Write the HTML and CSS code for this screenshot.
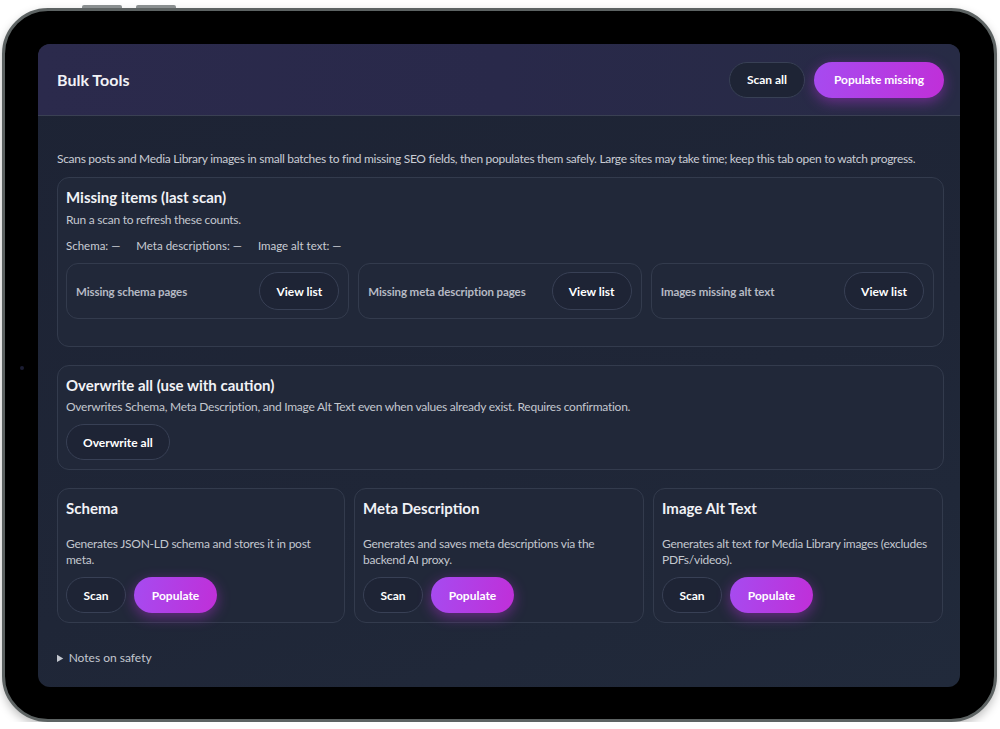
FILE: index.html
```html
<!DOCTYPE html>
<html lang="en">
  <head>
    <meta charset="UTF-8" />
    <meta name="viewport" content="width=device-width, initial-scale=1.0" />
    <title>Bulk Tools</title>
    <link rel="stylesheet" href="styles.css">
  </head>
  <body>
    <!-- tablet frame -->
    <div class="device">
      <span class="hw-btn hw-btn-1"></span>
      <span class="hw-btn hw-btn-2"></span>
      <span class="camera"></span>

      <div class="screen">
        <!-- header -->
        <div class="panel-head">
          <h1>Bulk Tools</h1>
          <div class="head-actions">
            <button class="btn btn-ghost">Scan all</button>
            <button class="btn btn-primary btn-wide">Populate missing</button>
          </div>
        </div>

        <div class="panel-body">
          <p class="intro">Scans posts and Media Library images in small batches to find missing SEO fields, then populates them safely. Large sites may take time; keep this tab open to watch progress.</p>

          <!-- missing counts -->
          <div class="card card-missing">
            <h2>Missing items (last scan)</h2>
            <p class="muted">Run a scan to refresh these counts.</p>
            <div class="counts">
              <span>Schema: —</span>
              <span>Meta descriptions: —</span>
              <span>Image alt text: —</span>
            </div>
            <div class="missing-row">
              <div class="missing-item">
                <span>Missing schema pages</span>
                <button class="btn btn-ghost btn-list">View list</button>
              </div>
              <div class="missing-item">
                <span>Missing meta description pages</span>
                <button class="btn btn-ghost btn-list">View list</button>
              </div>
              <div class="missing-item">
                <span>Images missing alt text</span>
                <button class="btn btn-ghost btn-list">View list</button>
              </div>
            </div>
          </div>

          <!-- overwrite -->
          <div class="card card-overwrite">
            <h2>Overwrite all (use with caution)</h2>
            <p class="muted">Overwrites Schema, Meta Description, and Image Alt Text even when values already exist. Requires confirmation.</p>
            <div class="actions">
              <button class="btn btn-ghost">Overwrite all</button>
            </div>
          </div>

          <!-- tools -->
          <div class="tool-grid">
            <div class="card tool">
              <h2>Schema</h2>
              <p class="muted">Generates JSON-LD schema and stores it in post meta.</p>
              <div class="actions">
                <button class="btn btn-ghost">Scan</button>
                <button class="btn btn-primary">Populate</button>
              </div>
            </div>
            <div class="card tool">
              <h2>Meta Description</h2>
              <p class="muted">Generates and saves meta descriptions via the backend AI proxy.</p>
              <div class="actions">
                <button class="btn btn-ghost">Scan</button>
                <button class="btn btn-primary">Populate</button>
              </div>
            </div>
            <div class="card tool">
              <h2>Image Alt Text</h2>
              <p class="muted">Generates alt text for Media Library images (excludes PDFs/videos).</p>
              <div class="actions">
                <button class="btn btn-ghost">Scan</button>
                <button class="btn btn-primary">Populate</button>
              </div>
            </div>
          </div>

          <details class="notes">
            <summary>Notes on safety</summary>
          </details>
        </div>
      </div>
    </div>
  </body>
</html>
```

FILE: styles.css
```css
/* page + tablet frame */
body {
  margin: 0;
  background: #fff;
  font-family: Lato, "Open Sans", sans-serif;
}
.device {
  position: relative;
  box-sizing: border-box;
  width: 995px;
  height: 714px;
  margin: 8px 0 0 2px;
  padding: 33px 34px 32px 33px;
  background: #000;
  border: 3px solid #5d6363;
  border-radius: 46px;
  box-shadow: 0 4px 10px rgba(0, 0, 0, 0.25);
}
.hw-btn {
  position: absolute;
  top: -6px;
  width: 40px;
  height: 3px;
  background: #8a8f90;
  border-radius: 2px 2px 0 0;
}
.hw-btn-1 { left: 77px; }
.hw-btn-2 { left: 131px; }
.camera {
  position: absolute;
  left: 15px;
  top: 355px;
  width: 4px;
  height: 4px;
  border-radius: 50%;
  background: #1b1d33;
}

.screen {
  height: 643px;
  border-radius: 12px;
  overflow: hidden;
  background: linear-gradient(160deg, #1d2334 0%, #1f2637 60%, #212a3b 100%);
  color: #e8eaf0;
}

/* header */
.panel-head {
  display: flex;
  align-items: center;
  justify-content: space-between;
  height: 71px;
  padding: 0 16px 0 19px;
  border-bottom: 1px solid #3a4053;
  background: linear-gradient(90deg, #2b2a4c 0%, #29294a 50%, #272b45 100%);
}
.panel-head h1 {
  margin: 0;
  font-size: 16px;
  font-weight: 700;
  color: #f1f2f6;
}
.head-actions {
  display: flex;
  gap: 9px;
}

/* buttons */
.btn {
  height: 36px;
  padding: 0 16px;
  border-radius: 18px;
  font-family: inherit;
  font-size: 12px;
  font-weight: 700;
  color: #fff;
  cursor: pointer;
}
.btn-ghost {
  background: #1e2435;
  border: 1px solid #384055;
}
.btn-primary {
  border: 0;
  background: linear-gradient(100deg, #a64bf0 0%, #c02fd8 100%);
  box-shadow: 0 4px 14px rgba(190, 50, 225, 0.45);
}
.btn-wide { width: 130px; }
.head-actions .btn-ghost { width: 76px; }
.btn-list {
  width: 80px;
  height: 38px;
  border-radius: 19px;
}

/* body */
.panel-body {
  padding: 35px 16px 0 19px;
}
.intro {
  margin: 0 0 10px;
  font-size: 12px;
  line-height: 16px;
  letter-spacing: -0.3px;
  white-space: nowrap;
  color: #c9ccd4;
}
.card {
  box-sizing: border-box;
  border: 1px solid #333b4d;
  border-radius: 12px;
  background: #212839;
  padding: 9px 9px 9px 8px;
}
.card h2 {
  margin: 0;
  font-size: 15px;
  line-height: 20px;
  font-weight: 700;
  color: #f1f2f6;
}
.muted {
  margin: 4px 0 0;
  font-size: 12px;
  line-height: 16px;
  letter-spacing: -0.25px;
  color: #c3c7cf;
}

/* missing items */
.card-missing {
  padding-bottom: 27px;
}
.card-missing .muted {
  margin-top: 5px;
}
.counts {
  display: flex;
  gap: 16px;
  margin-top: 10px;
  font-size: 11.5px;
  line-height: 16px;
  color: #c9ccd4;
}
.missing-row {
  display: grid;
  grid-template-columns: repeat(3, 1fr);
  gap: 9px;
  margin-top: 9px;
}
.missing-item {
  display: flex;
  align-items: center;
  justify-content: space-between;
  height: 56px;
  box-sizing: border-box;
  padding: 0 9px 0 9px;
  border: 1px solid #333b4d;
  border-radius: 12px;
  font-size: 11.5px;
  font-weight: 700;
  letter-spacing: -0.1px;
  color: #b6bac4;
}

.card-overwrite {
  margin-top: 18px;
}
.actions {
  display: flex;
  gap: 8px;
  margin-top: 9px;
}

/* tool cards */
.tool-grid {
  display: grid;
  grid-template-columns: 288px 290px 290px;
  gap: 10px 9px;
  margin-top: 18px;
}
.tool .muted {
  margin-top: 18px;
}
.tool .btn-ghost { width: 60px; padding: 0; }
.tool .btn-primary { width: 83px; padding: 0; }

/* notes */
.notes {
  margin-top: 27px;
  font-size: 12px;
  line-height: 16px;
  color: #c3c7cf;
}
.notes summary {
  cursor: pointer;
}
.notes summary::marker {
  font-size: 11px;
}
```
